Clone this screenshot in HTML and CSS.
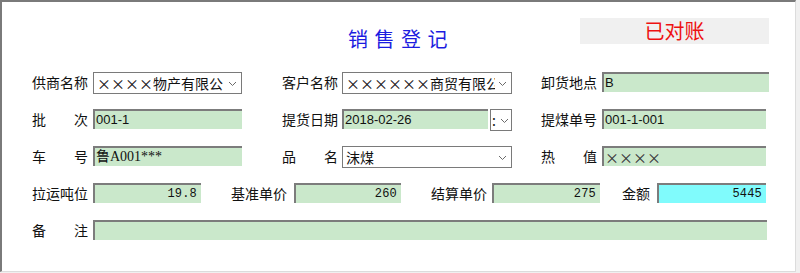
FILE: index.html
```html
<!DOCTYPE html>
<html lang="zh-CN">
<head>
    <meta charset="UTF-8">
    <title>销售登记</title>
    <link rel="stylesheet" href="styles.css">
</head>
<body>
<div class="window">
    <div class="header">
        <div></div>
        <h1 class="title">销售登记</h1>
        <div class="status">已对账</div>
    </div>

    <div class="row">
        <span class="label">供商名称</span>
        <div class="combo w149"><span class="combo-text">××××物产有限公</span><svg class="arrow" width="9" height="6" viewBox="0 0 9 6"><polyline points="1,1 4.5,4.5 8,1" fill="none" stroke="#6a6a6a" stroke-width="1"/></svg></div>
        <span class="label gap40">客户名称</span>
        <div class="combo w170"><span class="combo-text">××××××商贸有限公司</span><svg class="arrow" width="9" height="6" viewBox="0 0 9 6"><polyline points="1,1 4.5,4.5 8,1" fill="none" stroke="#6a6a6a" stroke-width="1"/></svg></div>
        <span class="label gap29">卸货地点</span>
        <div class="field w167">B</div>
    </div>

    <div class="row">
        <span class="label">批　　次</span>
        <div class="field w149">001-1</div>
        <span class="label gap40">提货日期</span>
        <div class="field w146 tight">2018-02-26</div>
        <div class="combo w22"><span class="combo-text">:</span><svg class="arrow" width="9" height="6" viewBox="0 0 9 6"><polyline points="1,1 4.5,4.5 8,1" fill="none" stroke="#6a6a6a" stroke-width="1"/></svg></div>
        <span class="label gap29">提煤单号</span>
        <div class="field w164">001-1-001</div>
    </div>

    <div class="row">
        <span class="label">车　　号</span>
        <div class="field w149 serif">鲁A001***</div>
        <span class="label gap40">品　　名</span>
        <div class="combo w170"><span class="combo-text">沫煤</span><svg class="arrow" width="9" height="6" viewBox="0 0 9 6"><polyline points="1,1 4.5,4.5 8,1" fill="none" stroke="#6a6a6a" stroke-width="1"/></svg></div>
        <span class="label gap29">热　　值</span>
        <div class="field w164 cjk">××××</div>
    </div>

    <div class="row">
        <span class="label">拉运吨位</span>
        <div class="field num w108">19.8</div>
        <span class="label gap30 wide">基准单价</span>
        <div class="field num w107">260</div>
        <span class="label gap30">结算单价</span>
        <div class="field num w108">275</div>
        <span class="label short gap22 wide">金额</span>
        <div class="field num total w109">5445</div>
    </div>

    <div class="row">
        <span class="label">备　　注</span>
        <div class="field w674"></div>
    </div>
</div>
</body>
</html>
```

FILE: styles.css
```css
body {
    margin: 0;
    background-color: #f0f0f0;
    font-family: "Noto Sans CJK SC", sans-serif;
    color: #111;
}
.window {
    box-sizing: border-box;
    width: 796px;
    height: 272px;
    background-color: #fff;
    border-top: 2px solid #7a7a7a;
    border-left: 2px solid #7a7a7a;
    border-right: 1px solid #dcdcdc;
    border-bottom: 1px solid #dcdcdc;
    padding-left: 30px;
}
.header {
    height: 70px;
    display: grid;
    grid-template-columns: 346px auto 1fr;
    margin-left: -30px;
}
.title {
    margin: 24px 0 0 0;
    font-size: 20px;
    font-weight: normal;
    line-height: 26px;
    letter-spacing: 6.5px;
    color: #1c1ce0;
}
.status {
    margin: 16px 0 0 126px;
    width: 189px;
    height: 26px;
    background-color: #f0f0f0;
    color: #ee1111;
    font-size: 20px;
    line-height: 26px;
    text-align: center;
}
.row {
    display: flex;
    align-items: flex-start;
    height: 22px;
    margin-bottom: 15px;
}
.label {
    width: 56px;
    margin-right: 5px;
    font-size: 14px;
    line-height: 20px;
    white-space: nowrap;
}
.label.short { width: 28px; }
.label.wide { margin-right: 7px; }
.label.gap40 { margin-right: 4px; }
.gap40 { margin-left: 40px; }
.gap30 { margin-left: 30px; }
.gap29 { margin-left: 29px; }
.gap22 { margin-left: 22px; }
.tight { margin-right: 2px; }

.field {
    box-sizing: border-box;
    height: 20px;
    background-color: #cae8cb;
    border-top: 2px solid #7c7c7c;
    border-left: 2px solid #7c7c7c;
    padding: 0 4px 0 1px;
    font-family: "Liberation Sans", "Noto Sans CJK SC", sans-serif;
    font-size: 13px;
    line-height: 18px;
    white-space: nowrap;
    overflow: hidden;
}
.field.serif { font-family: "Liberation Serif", "Noto Sans CJK SC", serif; font-size: 14px; }
.field.cjk { font-family: "Noto Sans CJK SC", sans-serif; font-size: 14px; color: #333; }
.field.num {
    text-align: right;
    font-family: "Liberation Mono", monospace;
    font-size: 12px;
    letter-spacing: 0.2px;
}
.field.total { background-color: #80fbfc; }

.combo {
    box-sizing: border-box;
    height: 22px;
    border: 1px solid #7a7a7a;
    background-color: #fff;
    display: flex;
    align-items: center;
    padding-left: 3px;
    font-size: 14px;
    overflow: hidden;
}
.combo-text {
    flex: 1;
    white-space: nowrap;
    overflow: hidden;
    line-height: 20px;
}
.arrow {
    flex: none;
    margin: 2px 4px 0 3px;
}
.w22 { width: 22px; padding-left: 1px; }
.w22 .arrow { margin: 2px 2px 0 0; }
.w107 { width: 107px; }
.w108 { width: 108px; }
.w109 { width: 109px; }
.w146 { width: 146px; }
.w149 { width: 149px; }
.w164 { width: 164px; }
.w167 { width: 167px; }
.w170 { width: 170px; }
.w674 { width: 674px; }
```
